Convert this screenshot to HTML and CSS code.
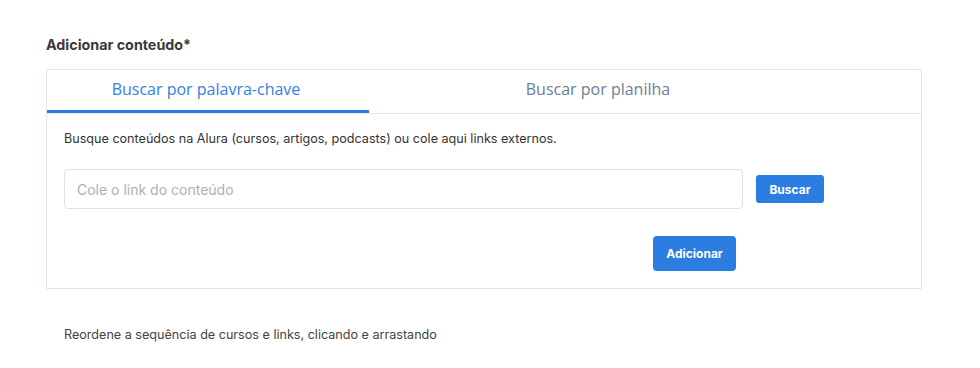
FILE: index.html
```html
<!DOCTYPE html>
<html lang="pt-BR">
<head>
  <meta charset="UTF-8" />
  <meta name="viewport" content="width=device-width, initial-scale=1.0" />
  <title>Adicionar conteúdo</title>
  <link rel="stylesheet" href="styles.css">
</head>
<body>

  <div class="page">
    <h2 class="section-title">Adicionar conteúdo*</h2>

    <div class="content-box">
      <div class="tabs">
        <button class="tab active">Buscar por palavra-chave</button>
        <button class="tab tab-wide">Buscar por planilha</button>
      </div>

      <div class="tab-panel">
        <p class="hint">Busque conteúdos na Alura (cursos, artigos, podcasts) ou cole aqui links externos.</p>

        <div class="search-row">
          <input type="text" class="link-input" placeholder="Cole o link do conteúdo">
          <button class="btn btn-small">Buscar</button>
        </div>

        <div class="actions">
          <button class="btn btn-add">Adicionar</button>
        </div>
      </div>
    </div>

    <p class="reorder-hint">Reordene a sequência de cursos e links, clicando e arrastando</p>
  </div>

</body>
</html>
```

FILE: styles.css
```css
body {
  font-family: Inter, "Noto Sans", sans-serif;
  background: #fff;
  margin: 0;
  color: #333;
}

.page {
  padding: 36px 58px 0 46px;
}

.section-title {
  font-size: 14.3px;
  font-weight: 700;
  color: #3a3a3a;
  margin: 0 0 16px;
  line-height: 17px;
}

.content-box {
  border: 1px solid #e1e4e8;
  width: 874px;
}

/* Tabs */
.tabs {
  display: flex;
  border-bottom: 1px solid #e1e4e8;
}

.tab {
  font-family: "Open Sans", sans-serif;
  font-size: 16px;
  background: none;
  border: none;
  border-bottom: 3px solid transparent;
  color: #6b7f93;
  height: 43px;
  padding: 0 4px 2px 0;
  width: 322px;
  cursor: pointer;
}

.tab-wide {
  width: 458px;
  padding-right: 0;
}

.tab.active {
  color: #3580e4;
  border-bottom-color: #2b7de1;
}

/* Panel */
.tab-panel {
  padding: 17px 17px 17px;
}

.hint {
  font-size: 12.6px;
  color: #333;
  margin: 0 0 22px;
  line-height: 16px;
}

.search-row {
  display: flex;
  align-items: center;
  gap: 13px;
}

.link-input {
  width: 679px;
  height: 40px;
  box-sizing: border-box;
  border: 1px solid #dde0e4;
  border-radius: 4px;
  padding: 0 12px;
  font-family: Inter, sans-serif;
  font-size: 14px;
  color: #333;
}

.link-input::placeholder {
  color: #b0b0b0;
}

.btn {
  background: #2b7de1;
  color: #fff;
  border: none;
  font-family: Inter, sans-serif;
  font-weight: 700;
  font-size: 12px;
  cursor: pointer;
}

.btn-small {
  height: 28px;
  width: 68px;
  border-radius: 3px;
}

.actions {
  display: flex;
  padding: 27px 0 0 589px;
}

.btn-add {
  height: 35px;
  width: 83px;
  border-radius: 4px;
}

.reorder-hint {
  font-size: 12.6px;
  color: #444;
  margin: 38px 0 0 18px;
  line-height: 16px;
}
```
